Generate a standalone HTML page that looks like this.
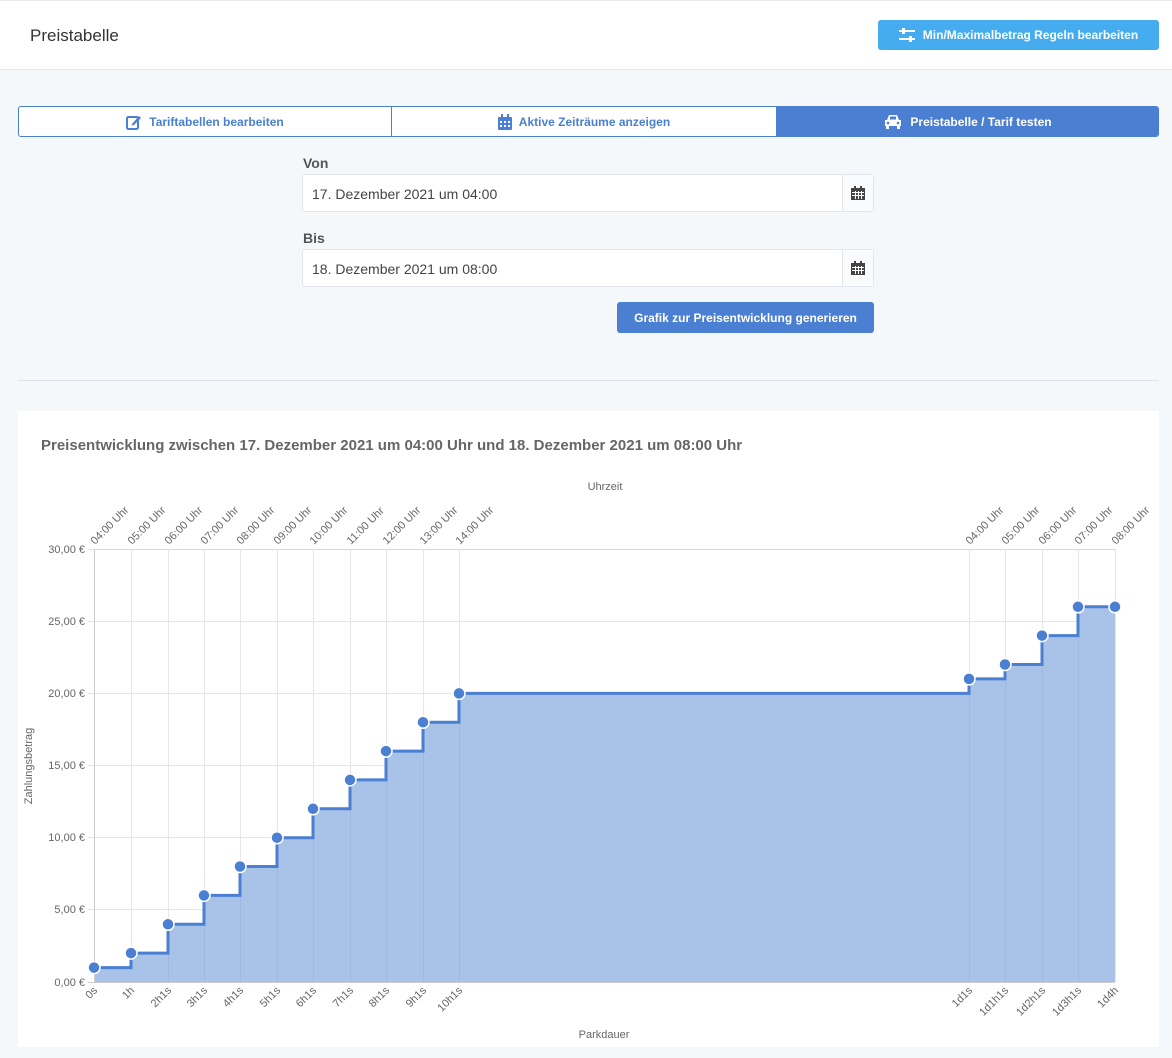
<!DOCTYPE html>
<html><head><meta charset="utf-8">
<style>
*{box-sizing:border-box;margin:0;padding:0}
body{width:1172px;height:1058px;background:#f5f8fb;font-family:"Liberation Sans",sans-serif;position:relative;overflow:hidden;color:#333}
.abs{position:absolute}
.hdr{left:0;top:0;width:1172px;height:70px;background:#fff;border-top:1px solid #e6e9ee;border-bottom:1px solid #e6e9ee}
.tabs{left:18px;top:106px;width:1141px;height:31px;border:1px solid #4a7fd1;border-radius:3px;display:flex;background:#fff;overflow:hidden}
.tab{display:flex;align-items:center;justify-content:center;font-size:12px;font-weight:bold;color:#4a7fd1;gap:7px}
.lbl{font-size:14px;font-weight:bold;color:#555}
.inp{left:302px;width:572px;height:38px;background:#fff;border:1px solid #e2e5ea;border-radius:3px;font-size:14px;color:#444;padding:11px 9px}
.inp .cal{position:absolute;right:0;top:0;width:31px;height:36px;border-left:1px solid #e2e5ea;background:#fafbfc;display:flex;align-items:center;justify-content:center}
</style></head><body>
<div class="abs hdr"></div>
<div class="abs" style="left:30px;top:26px;font-size:17px;color:#333">Preistabelle</div>
<div class="abs" style="left:878px;top:20px;width:281px;height:30px;background:#45acf0;border-radius:3px;color:#fff;font-size:12px;font-weight:bold;display:flex;align-items:center;justify-content:center;gap:8px">
<svg width="16" height="14" viewBox="0 0 16 14"><g stroke="#fff" stroke-width="2"><line x1="0" y1="3" x2="16" y2="3"/><line x1="0" y1="11" x2="16" y2="11"/></g><rect x="3" y="0" width="3" height="6" fill="#fff"/><rect x="10" y="8" width="3" height="6" fill="#fff"/></svg>Min/Maximalbetrag Regeln bearbeiten</div>

<div class="abs tabs">
<div class="tab" style="width:373px;border-right:1px solid #4a7fd1"><svg width="16" height="16" viewBox="0 0 16 16"><rect x="1" y="3" width="11" height="12" rx="1.5" fill="none" stroke="#4a7fd1" stroke-width="2"/><path d="M6 10 L13 2 L15 4 L8 11 L5.5 11.5Z" fill="#4a7fd1"/></svg>Tariftabellen bearbeiten</div>
<div class="tab" style="width:385px;border-right:1px solid #4a7fd1"><svg width="14" height="16" viewBox="0 0 14 16"><rect x="0" y="3" width="14" height="13" rx="1" fill="#4a7fd1"/><rect x="3" y="0" width="2" height="4" fill="#4a7fd1"/><rect x="9" y="0" width="2" height="4" fill="#4a7fd1"/><g fill="#fff"><rect x="2" y="7" width="2" height="2"/><rect x="6" y="7" width="2" height="2"/><rect x="10" y="7" width="2" height="2"/><rect x="2" y="11" width="2" height="2"/><rect x="6" y="11" width="2" height="2"/><rect x="10" y="11" width="2" height="2"/></g></svg>Aktive Zeiträume anzeigen</div>
<div class="tab" style="flex:1;background:#4a7fd1;color:#fff"><svg width="20" height="15" viewBox="0 0 20 15"><path d="M4 6 L6 1 H14 L16 6 H18 V12 H2 V6Z" fill="#fff"/><rect x="3" y="11" width="3" height="4" fill="#fff"/><rect x="14" y="11" width="3" height="4" fill="#fff"/><rect x="7" y="2.5" width="6" height="3" fill="#4a7fd1"/><circle cx="5" cy="9" r="1.3" fill="#4a7fd1"/><circle cx="15" cy="9" r="1.3" fill="#4a7fd1"/></svg>Preistabelle / Tarif testen</div>
</div>

<div class="abs lbl" style="left:303px;top:155px">Von</div>
<div class="abs inp" style="top:174px">17. Dezember 2021 um 04:00<div class="cal"><svg width="14" height="14" viewBox="0 0 14 14"><rect x="0" y="2" width="14" height="12" fill="#444"/><rect x="3" y="0" width="2" height="3" fill="#444"/><rect x="9" y="0" width="2" height="3" fill="#444"/><g fill="#fafbfc"><rect x="1" y="6" width="12" height="1"/><rect x="1" y="9" width="12" height="1"/><rect x="4" y="5" width="1" height="8"/><rect x="7" y="5" width="1" height="8"/><rect x="10" y="5" width="1" height="8"/></g></svg></div></div>
<div class="abs lbl" style="left:303px;top:230px">Bis</div>
<div class="abs inp" style="top:249px">18. Dezember 2021 um 08:00<div class="cal"><svg width="14" height="14" viewBox="0 0 14 14"><rect x="0" y="2" width="14" height="12" fill="#444"/><rect x="3" y="0" width="2" height="3" fill="#444"/><rect x="9" y="0" width="2" height="3" fill="#444"/><g fill="#fafbfc"><rect x="1" y="6" width="12" height="1"/><rect x="1" y="9" width="12" height="1"/><rect x="4" y="5" width="1" height="8"/><rect x="7" y="5" width="1" height="8"/><rect x="10" y="5" width="1" height="8"/></g></svg></div></div>
<div class="abs" style="left:617px;top:302px;width:257px;height:31px;background:#4a7fd1;border-radius:3px;color:#fff;font-size:12px;font-weight:bold;display:flex;align-items:center;justify-content:center">Grafik zur Preisentwicklung generieren</div>

<div class="abs" style="left:18px;top:380px;width:1141px;height:1px;background:#dfe3e8"></div>

<div class="abs" style="left:18px;top:411px;width:1141px;height:636px;background:#fff"></div>
<div class="abs" style="left:41px;top:437px;font-size:15px;font-weight:bold;color:#666">Preisentwicklung zwischen 17. Dezember 2021 um 04:00 Uhr und 18. Dezember 2021 um 08:00 Uhr</div>

<svg class="abs" style="left:0;top:0" width="1172" height="1058" font-family="Liberation Sans, sans-serif">
<g stroke="#e6e6e6" stroke-width="1">
<line x1="94" y1="549.5" x2="1115" y2="549.5" stroke="#d8d8d8"/>
<line x1="88" y1="621.5" x2="1115" y2="621.5"/>
<line x1="88" y1="693.5" x2="1115" y2="693.5"/>
<line x1="88" y1="765.5" x2="1115" y2="765.5"/>
<line x1="88" y1="837.5" x2="1115" y2="837.5"/>
<line x1="88" y1="909.5" x2="1115" y2="909.5"/>
<line x1="88" y1="549.5" x2="94" y2="549.5"/>
<line x1="131.5" y1="549" x2="131.5" y2="982"/><line x1="168.5" y1="549" x2="168.5" y2="982"/><line x1="204.5" y1="549" x2="204.5" y2="982"/><line x1="240.5" y1="549" x2="240.5" y2="982"/><line x1="277.5" y1="549" x2="277.5" y2="982"/><line x1="313.5" y1="549" x2="313.5" y2="982"/><line x1="350.5" y1="549" x2="350.5" y2="982"/><line x1="386.5" y1="549" x2="386.5" y2="982"/><line x1="423.5" y1="549" x2="423.5" y2="982"/><line x1="459.5" y1="549" x2="459.5" y2="982"/><line x1="969.5" y1="549" x2="969.5" y2="982"/><line x1="1005.5" y1="549" x2="1005.5" y2="982"/><line x1="1042.5" y1="549" x2="1042.5" y2="982"/><line x1="1078.5" y1="549" x2="1078.5" y2="982"/><line x1="1115.5" y1="549" x2="1115.5" y2="982"/>
</g>
<path d="M94,967.6 H131 V953.1 H168 V924.3 H204 V895.4 H240 V866.5 H277 V837.7 H313 V808.8 H350 V779.9 H386 V751.1 H423 V722.2 H459 V693.4 H969 V678.9 H1005 V664.5 H1042 V635.6 H1078 V606.8 H1115 V982 H94Z" fill="#a9c3e8"/>
<g stroke="#9ab4da" stroke-width="1" opacity="0.7">
<line x1="168.5" y1="924" x2="168.5" y2="982"/><line x1="204.5" y1="895" x2="204.5" y2="982"/><line x1="240.5" y1="866" x2="240.5" y2="982"/><line x1="277.5" y1="837" x2="277.5" y2="982"/><line x1="313.5" y1="808" x2="313.5" y2="982"/><line x1="350.5" y1="779" x2="350.5" y2="982"/><line x1="386.5" y1="751" x2="386.5" y2="982"/><line x1="423.5" y1="722" x2="423.5" y2="982"/><line x1="459.5" y1="693" x2="459.5" y2="982"/><line x1="969.5" y1="693" x2="969.5" y2="982"/><line x1="1005.5" y1="678" x2="1005.5" y2="982"/><line x1="1042.5" y1="664" x2="1042.5" y2="982"/><line x1="1078.5" y1="635" x2="1078.5" y2="982"/>
</g>
<line x1="94.5" y1="549" x2="94.5" y2="982" stroke="#ccc"/>
<line x1="88" y1="982.5" x2="1115" y2="982.5" stroke="#ccc"/>
<path d="M94,967.6 H131 V953.1 H168 V924.3 H204 V895.4 H240 V866.5 H277 V837.7 H313 V808.8 H350 V779.9 H386 V751.1 H423 V722.2 H459 V693.4 H969 V678.9 H1005 V664.5 H1042 V635.6 H1078 V606.8 H1115" fill="none" stroke="#4a7fd1" stroke-width="3"/>
<g fill="#4a7fd1" stroke="#fff" stroke-width="1.5">
<circle cx="94" cy="967.6" r="6"/><circle cx="131" cy="953.1" r="6"/><circle cx="168" cy="924.3" r="6"/><circle cx="204" cy="895.4" r="6"/><circle cx="240" cy="866.5" r="6"/><circle cx="277" cy="837.7" r="6"/><circle cx="313" cy="808.8" r="6"/><circle cx="350" cy="779.9" r="6"/><circle cx="386" cy="751.1" r="6"/><circle cx="423" cy="722.2" r="6"/><circle cx="459" cy="693.4" r="6"/><circle cx="969" cy="678.9" r="6"/><circle cx="1005" cy="664.5" r="6"/><circle cx="1042" cy="635.6" r="6"/><circle cx="1078" cy="606.8" r="6"/><circle cx="1115" cy="606.8" r="6"/>
</g>
<g font-size="11" fill="#666" text-anchor="end">
<text x="85" y="553">30,00 €</text><text x="85" y="625">25,00 €</text><text x="85" y="697">20,00 €</text><text x="85" y="769">15,00 €</text><text x="85" y="841">10,00 €</text><text x="85" y="913">5,00 €</text><text x="85" y="986">0,00 €</text>
</g>
<text x="605" y="490" font-size="11" fill="#666" text-anchor="middle">Uhrzeit</text>
<text x="604" y="1038" font-size="11" fill="#666" text-anchor="middle">Parkdauer</text>
<text transform="translate(32,766) rotate(-90)" font-size="11" fill="#666" text-anchor="middle">Zahlungsbetrag</text>
<g font-size="11" fill="#666">
<text transform="translate(95,545) rotate(-45)">04:00 Uhr</text><text transform="translate(132,545) rotate(-45)">05:00 Uhr</text><text transform="translate(169,545) rotate(-45)">06:00 Uhr</text><text transform="translate(205,545) rotate(-45)">07:00 Uhr</text><text transform="translate(241,545) rotate(-45)">08:00 Uhr</text><text transform="translate(278,545) rotate(-45)">09:00 Uhr</text><text transform="translate(314,545) rotate(-45)">10:00 Uhr</text><text transform="translate(351,545) rotate(-45)">11:00 Uhr</text><text transform="translate(387,545) rotate(-45)">12:00 Uhr</text><text transform="translate(424,545) rotate(-45)">13:00 Uhr</text><text transform="translate(460,545) rotate(-45)">14:00 Uhr</text><text transform="translate(970,545) rotate(-45)">04:00 Uhr</text><text transform="translate(1006,545) rotate(-45)">05:00 Uhr</text><text transform="translate(1043,545) rotate(-45)">06:00 Uhr</text><text transform="translate(1079,545) rotate(-45)">07:00 Uhr</text><text transform="translate(1116,545) rotate(-45)">08:00 Uhr</text>
</g>
<g font-size="11" fill="#666" text-anchor="end">
<text transform="translate(98,991) rotate(-45)">0s</text><text transform="translate(135,991) rotate(-45)">1h</text><text transform="translate(172,991) rotate(-45)">2h1s</text><text transform="translate(208,991) rotate(-45)">3h1s</text><text transform="translate(244,991) rotate(-45)">4h1s</text><text transform="translate(281,991) rotate(-45)">5h1s</text><text transform="translate(317,991) rotate(-45)">6h1s</text><text transform="translate(354,991) rotate(-45)">7h1s</text><text transform="translate(390,991) rotate(-45)">8h1s</text><text transform="translate(427,991) rotate(-45)">9h1s</text><text transform="translate(463,991) rotate(-45)">10h1s</text><text transform="translate(973,991) rotate(-45)">1d1s</text><text transform="translate(1009,991) rotate(-45)">1d1h1s</text><text transform="translate(1046,991) rotate(-45)">1d2h1s</text><text transform="translate(1082,991) rotate(-45)">1d3h1s</text><text transform="translate(1119,991) rotate(-45)">1d4h</text>
</g>
</svg>
</body></html>
